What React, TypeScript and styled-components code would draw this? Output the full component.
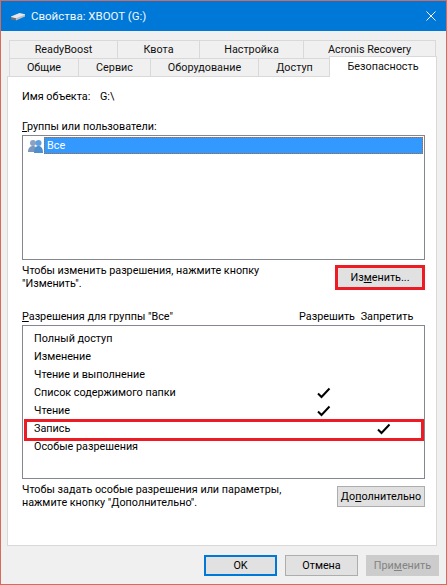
import React from "react";
import styled, { createGlobalStyle } from "styled-components";

const Global = createGlobalStyle`
  html, body { margin: 0; padding: 0; background: #f0f0f0; }
  body { font-family: Roboto, "Liberation Sans", sans-serif; font-size: 10.8px; color: #000; }
  * { box-sizing: border-box; }
`;

const Win = styled.div`
  width: 447px;
  height: 585px;
  border: 1px solid #d9695b;
  background: #f0f0f0;
  display: flex;
  flex-direction: column;
  overflow: hidden;
`;

const TitleBar = styled.div`
  height: 30px;
  background: #0078d7;
  color: #fff;
  display: flex;
  align-items: center;
  padding: 0 10px 0 9px;
  flex: none;
`;

const TitleText = styled.span`
  margin-left: 5px;
  flex: 1;
  font-size: 11.5px;
  color: #f2f8fd;
`;

const Body = styled.div`
  padding: 9px 8px 0 6px;
  flex: 1;
  display: flex;
  flex-direction: column;
`;

const TabRow = styled.div`
  display: flex;
  height: 18px;
  padding-left: 2px;
  position: relative;
`;

const Tab = styled.div<{ $w: number }>`
  width: ${(p) => p.$w}px;
  height: 19px;
  margin-right: -1px;
  border: 1px solid #d9d9d9;
  background: #f0f0f0;
  display: flex;
  align-items: center;
  justify-content: center;
  padding-bottom: 1px;
  color: #111;
  white-space: nowrap;
`;

const ActiveTab = styled(Tab)`
  height: 21px;
  margin-top: -2px;
  margin-left: -1px;
  background: #fff;
  border-bottom: none;
  position: relative;
  z-index: 2;
  padding-bottom: 2px;
`;

const Panel = styled.div`
  width: 430px;
  height: 470px;
  background: #fff;
  border: 1px solid #d9d9d9;
  padding: 0 11px 0 14px;
  position: relative;
  z-index: 1;
`;

const NameRow = styled.div`
  display: flex;
  height: 16px;
  margin-top: 12px;
  line-height: 16px;
  white-space: nowrap;
`;

const NameLabel = styled.span`
  width: 78px;
`;

const Label = styled.div<{ $top: number }>`
  margin-top: ${(p) => p.$top}px;
  height: 16px;
  line-height: 16px;
`;

const U = styled.span`
  text-decoration: underline;
  text-underline-offset: 1px;
`;

const ListBox = styled.div<{ $h: number }>`
  height: ${(p) => p.$h}px;
  border: 1px solid #828790;
  background: #fff;
`;

const UserRow = styled.div`
  display: flex;
  align-items: center;
  height: 17px;
  margin: 1px 1px 0 5px;
`;

const UserName = styled.div`
  flex: 1;
  height: 17px;
  padding-left: 2px;
  line-height: 15px;
  background: #3399ff;
  color: #fff;
  border: 1px dotted #b5651d;
`;

const HintRow = styled.div<{ $top: number }>`
  display: flex;
  justify-content: space-between;
  align-items: flex-start;
  margin-top: ${(p) => p.$top}px;
`;

const Hint = styled.div`
  line-height: 13px;
  padding-top: 1px;
`;

const Button = styled.button`
  font: inherit;
  color: #000;
  padding: 0;
  background: #e1e1e1;
  border: 1px solid #adadad;
  height: 21px;
  line-height: 17px;
`;

const RedFrame = styled.div`
  width: 90px;
  height: 25px;
  border: 3px solid #ed1c24;
  display: flex;
  margin-top: 2px;
`;

const ChangeButton = styled(Button)`
  flex: 1;
  height: 19px;
  border: none;
`;

const MoreButton = styled(Button)`
  width: 88px;
  margin-top: 4px;
`;

const PermHeader = styled.div`
  display: grid;
  grid-template-columns: 1fr 60px 60px 8px;
  height: 16px;
  line-height: 16px;
  margin-top: 19px;
`;

const HeadCell = styled.span`
  text-align: center;
  white-space: nowrap;
`;

const PermRow = styled.div<{ $hl?: boolean }>`
  display: grid;
  grid-template-columns: 1fr 60px 60px 10px;
  height: 18px;
  line-height: 18px;
  padding-left: 11px;
  position: relative;
  ${(p) =>
    p.$hl &&
    `&::after {
      content: "";
      position: absolute;
      left: 1px; right: 0; top: -1px; bottom: -3px;
      border: 3px solid #ed1c24;
    }`}
`;

const CheckCell = styled.span`
  display: flex;
  align-items: center;
  justify-content: center;
`;

const PermBox = styled(ListBox)`
  padding-top: 4px;
`;

const Footer = styled.div`
  display: flex;
  justify-content: flex-end;
  gap: 8px;
  margin-top: 9px;
  margin-right: -1px;
`;

const FootButton = styled(Button)<{ $primary?: boolean; $off?: boolean }>`
  width: 73px;
  border: ${(p) => (p.$primary ? "2px solid #0078d7" : p.$off ? "1px solid #cccccc" : "1px solid #adadad")};
  background: ${(p) => (p.$off ? "#cccccc" : "#e1e1e1")};
  color: ${(p) => (p.$off ? "#838383" : "#000")};
`;

const DriveIcon = () => (
  <svg width="16" height="10" viewBox="0 0 16 10">
    <path d="M1 5.5 L9.5 2 L15 3.2 L15 5 L6 8 L1 7 Z" fill="#e4e8ec" />
    <path d="M1 6 L6 7.2 L6 9.5 L1 8.4 Z" fill="#6f747a" />
    <path d="M6 7.2 L15 3.8 L15 5.6 L6 9.5 Z" fill="#b9bec4" />
  </svg>
);

const CloseIcon = () => (
  <svg width="10" height="10" viewBox="0 0 10 10">
    <path d="M0.5 0.5 L9.5 9.5 M9.5 0.5 L0.5 9.5" stroke="#fff" strokeWidth="1" />
  </svg>
);

const UsersIcon = () => (
  <svg width="16" height="16" viewBox="0 0 16 16">
    <circle cx="5" cy="5" r="3" fill="#8aa3c4" />
    <path d="M0 14 C0 9 3 8 5 8 C7 8 9 9 9 14 Z" fill="#7b97bd" />
    <circle cx="10.5" cy="5" r="3" fill="#5f9fdc" />
    <path d="M6 15 C6 9.5 8.5 8 10.5 8 C12.5 8 15 9.5 15 15 Z" fill="#4d8fd0" />
  </svg>
);

const Check = () => (
  <svg width="14" height="12" viewBox="0 0 14 12">
    <path d="M1 6.5 L4.5 10 L12.5 1.5" fill="none" stroke="#000" strokeWidth="2" />
  </svg>
);

const perms: [string, boolean, boolean][] = [
  ["Полный доступ", false, false],
  ["Изменение", false, false],
  ["Чтение и выполнение", false, false],
  ["Список содержимого папки", true, false],
  ["Чтение", true, false],
  ["Запись", false, true],
  ["Особые разрешения", false, false],
];

export default function App() {
  return (
    <Win>
      <Global />
      <TitleBar>
        <DriveIcon />
        <TitleText>Свойства: XBOOT (G:)</TitleText>
        <CloseIcon />
      </TitleBar>
      <Body>
        <TabRow>
          <Tab $w={109}>ReadyBoost</Tab>
          <Tab $w={83}>Квота</Tab>
          <Tab $w={105}>Настройка</Tab>
          <Tab $w={133}>Acronis Recovery</Tab>
        </TabRow>
        <TabRow>
          <Tab $w={70}>Общие</Tab>
          <Tab $w={73}>Сервис</Tab>
          <Tab $w={109}>Оборудование</Tab>
          <Tab $w={73}>Доступ</Tab>
          <ActiveTab $w={108}>Безопасность</ActiveTab>
        </TabRow>
        <Panel>
          <NameRow>
            <NameLabel>Имя объекта:</NameLabel>
            <span>G:\</span>
          </NameRow>
          <Label $top={14}>
            <U>Г</U>руппы или пользователи:
          </Label>
          <ListBox $h={125}>
            <UserRow>
              <UsersIcon />
              <UserName>Все</UserName>
            </UserRow>
          </ListBox>
          <HintRow $top={3}>
            <Hint>
              Чтобы изменить разрешения, нажмите кнопку
              <br />
              "Изменить".
            </Hint>
            <RedFrame>
              <ChangeButton>
                Из<U>м</U>енить...
              </ChangeButton>
            </RedFrame>
          </HintRow>
          <PermHeader>
            <span>
              <U>Р</U>азрешения для группы "Все"
            </span>
            <HeadCell>Разрешить</HeadCell>
            <HeadCell>Запретить</HeadCell>
          </PermHeader>
          <PermBox $h={154}>
            {perms.map(([name, allow, deny]) => (
              <PermRow key={name} $hl={name === "Запись"}>
                <span>{name}</span>
                <CheckCell>{allow && <Check />}</CheckCell>
                <CheckCell>{deny && <Check />}</CheckCell>
              </PermRow>
            ))}
          </PermBox>
          <HintRow $top={3}>
            <Hint>
              Чтобы задать особые разрешения или параметры,
              <br />
              нажмите кнопку "Дополнительно".
            </Hint>
            <MoreButton>
              До<U>п</U>олнительно
            </MoreButton>
          </HintRow>
        </Panel>
        <Footer>
          <FootButton $primary>OK</FootButton>
          <FootButton>Отмена</FootButton>
          <FootButton $off>
            При<U>м</U>енить
          </FootButton>
        </Footer>
      </Body>
    </Win>
  );
}
